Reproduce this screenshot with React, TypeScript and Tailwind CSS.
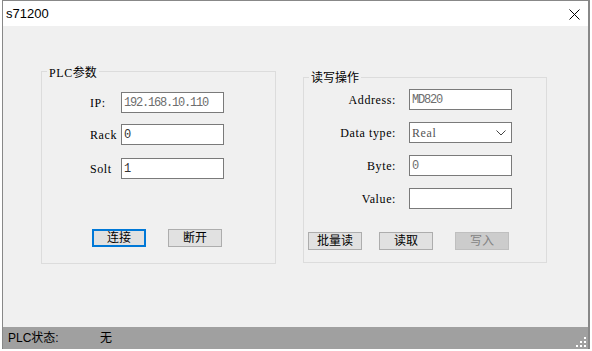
import React from "react";

const mono = "font-['Liberation_Mono','Noto_Sans_CJK_SC',monospace] text-[12px] tracking-[-1.2px]";
const serif = "font-['Liberation_Serif','Noto_Sans_CJK_SC',serif] text-[12px] tracking-[0.6px]";
const cjk = "font-['Liberation_Sans','Noto_Sans_CJK_SC',sans-serif] text-[12px]";

const Field: React.FC<{ value?: string; muted?: boolean }> = ({ value = "", muted }) => (
    <div
        className={`w-[103px] h-[21px] bg-white border border-[#7a7a7a] flex items-center pl-[2px] ${mono} ${
            muted ? "text-[#6d6d6d]" : "text-[#333]"
        }`}
    >
        {value}
    </div>
);

const Btn: React.FC<{ label: string; focus?: boolean; disabled?: boolean }> = ({ label, focus, disabled }) => (
    <div
        className={`w-[54px] h-[18px] flex items-center justify-center ${cjk} ${
            focus
                ? "border-2 border-[#0078d7] bg-[#e1e1e1] text-black"
                : disabled
                ? "border border-[#bfbfbf] bg-[#cccccc] text-[#838383]"
                : "border border-[#adadad] bg-[#e1e1e1] text-black"
        }`}
    >
        {label}
    </div>
);

export default function App() {
    return (
        <div className="w-[592px] h-[351px] bg-white overflow-hidden">
            <div className="ml-[2px] w-[588px] h-[349px] border-l border-t border-r-2 border-[#888] border-b border-b-[#7a7a7a] flex flex-col">
                {/* Title bar */}
                <div className="h-[25px] bg-white flex items-center justify-between pl-[3px] pr-[8px] shrink-0">
                    <span className="font-['Liberation_Sans',sans-serif] text-[13px] text-black leading-none">s71200</span>
                    <svg width="11" height="11" viewBox="0 0 11 11" className="mt-[1px]">
                        <path d="M0.5 0.5 L10.5 10.5 M10.5 0.5 L0.5 10.5" stroke="#000" strokeWidth="1" />
                    </svg>
                </div>

                {/* Body */}
                <div className="h-[301px] bg-[#f0f0f0] flex items-start pl-[38px] pt-[45px] shrink-0">
                    {/* PLC params */}
                    <div className="relative w-[235px] h-[193px] border border-[#dcdcdc]">
                        <span className="absolute -top-[8px] left-[5px] px-[2px] bg-[#f0f0f0] leading-[14px] text-black">
                            <span className={serif}>PLC</span>
                            <span className={cjk}>参数</span>
                        </span>
                        <div className="pl-[48px] pt-[20px] flex flex-col">
                            <div className="flex items-center">
                                <span className={`w-[31px] ${serif} text-black`}>IP:</span>
                                <Field value="192.168.10.110" muted />
                            </div>
                            <div className="flex items-center mt-[11px]">
                                <span className={`w-[31px] ${serif} text-black`}>Rack</span>
                                <Field value="0" />
                            </div>
                            <div className="flex items-center mt-[13px]">
                                <span className={`w-[31px] ${serif} text-black`}>Solt</span>
                                <Field value="1" />
                            </div>
                        </div>
                        <div className="pl-[50px] mt-[50px] flex gap-[22px]">
                            <Btn label="连接" focus />
                            <Btn label="断开" />
                        </div>
                    </div>

                    {/* Read / write */}
                    <div className="relative ml-[27px] mt-[6px] w-[244px] h-[186px] border border-[#dcdcdc]">
                        <span className="absolute -top-[9px] left-[5px] px-[2px] bg-[#f0f0f0] leading-[16px] text-black font-['Noto_Sans_CJK_SC',sans-serif] text-[12px]">
                            读写操作
                        </span>
                        <div className="pt-[11px] flex flex-col gap-[12px]">
                            <div className="flex items-center">
                                <span className={`w-[92px] text-right ${serif} text-black`}>Address:</span>
                                <div className="ml-[13px]">
                                    <Field value="MD820" muted />
                                </div>
                            </div>
                            <div className="flex items-center">
                                <span className={`w-[92px] text-right ${serif} text-black`}>Data type:</span>
                                <div className="ml-[13px] w-[103px] h-[21px] bg-white border border-[#7a7a7a] flex items-center justify-between pl-[2px] pr-[5px] text-[#555]">
                                    <span className={serif}>Real</span>
                                    <svg width="10" height="6" viewBox="0 0 10 6">
                                        <path d="M0.5 0.5 L5 5 L9.5 0.5" fill="none" stroke="#444" strokeWidth="1" />
                                    </svg>
                                </div>
                            </div>
                            <div className="flex items-center">
                                <span className={`w-[92px] text-right ${serif} text-black`}>Byte:</span>
                                <div className="ml-[13px]">
                                    <Field value="0" muted />
                                </div>
                            </div>
                            <div className="flex items-center">
                                <span className={`w-[92px] text-right ${serif} text-black`}>Value:</span>
                                <div className="ml-[13px]">
                                    <Field />
                                </div>
                            </div>
                        </div>
                        <div className="pl-[4px] mt-[23px] flex">
                            <Btn label="批量读" />
                            <div className="ml-[17px]">
                                <Btn label="读取" />
                            </div>
                            <div className="ml-[22px]">
                                <Btn label="写入" disabled />
                            </div>
                        </div>
                    </div>
                </div>

                {/* Status bar */}
                <div className="h-[22px] bg-[#a0a0a0] flex items-center pl-[5px] pr-[2px] shrink-0">
                    <span className={`w-[92px] ${cjk} text-black`}>PLC状态:</span>
                    <span className={`${cjk} text-black`}>无</span>
                    <svg width="10" height="10" viewBox="0 0 10 10" className="ml-auto mt-[8px]">
                        <rect x="8" y="0" width="2" height="2" fill="#fff" />
                        <rect x="4" y="4" width="2" height="2" fill="#fff" />
                        <rect x="8" y="4" width="2" height="2" fill="#fff" />
                        <rect x="0" y="8" width="2" height="2" fill="#fff" />
                        <rect x="4" y="8" width="2" height="2" fill="#fff" />
                        <rect x="8" y="8" width="2" height="2" fill="#fff" />
                    </svg>
                </div>
            </div>
        </div>
    );
}
